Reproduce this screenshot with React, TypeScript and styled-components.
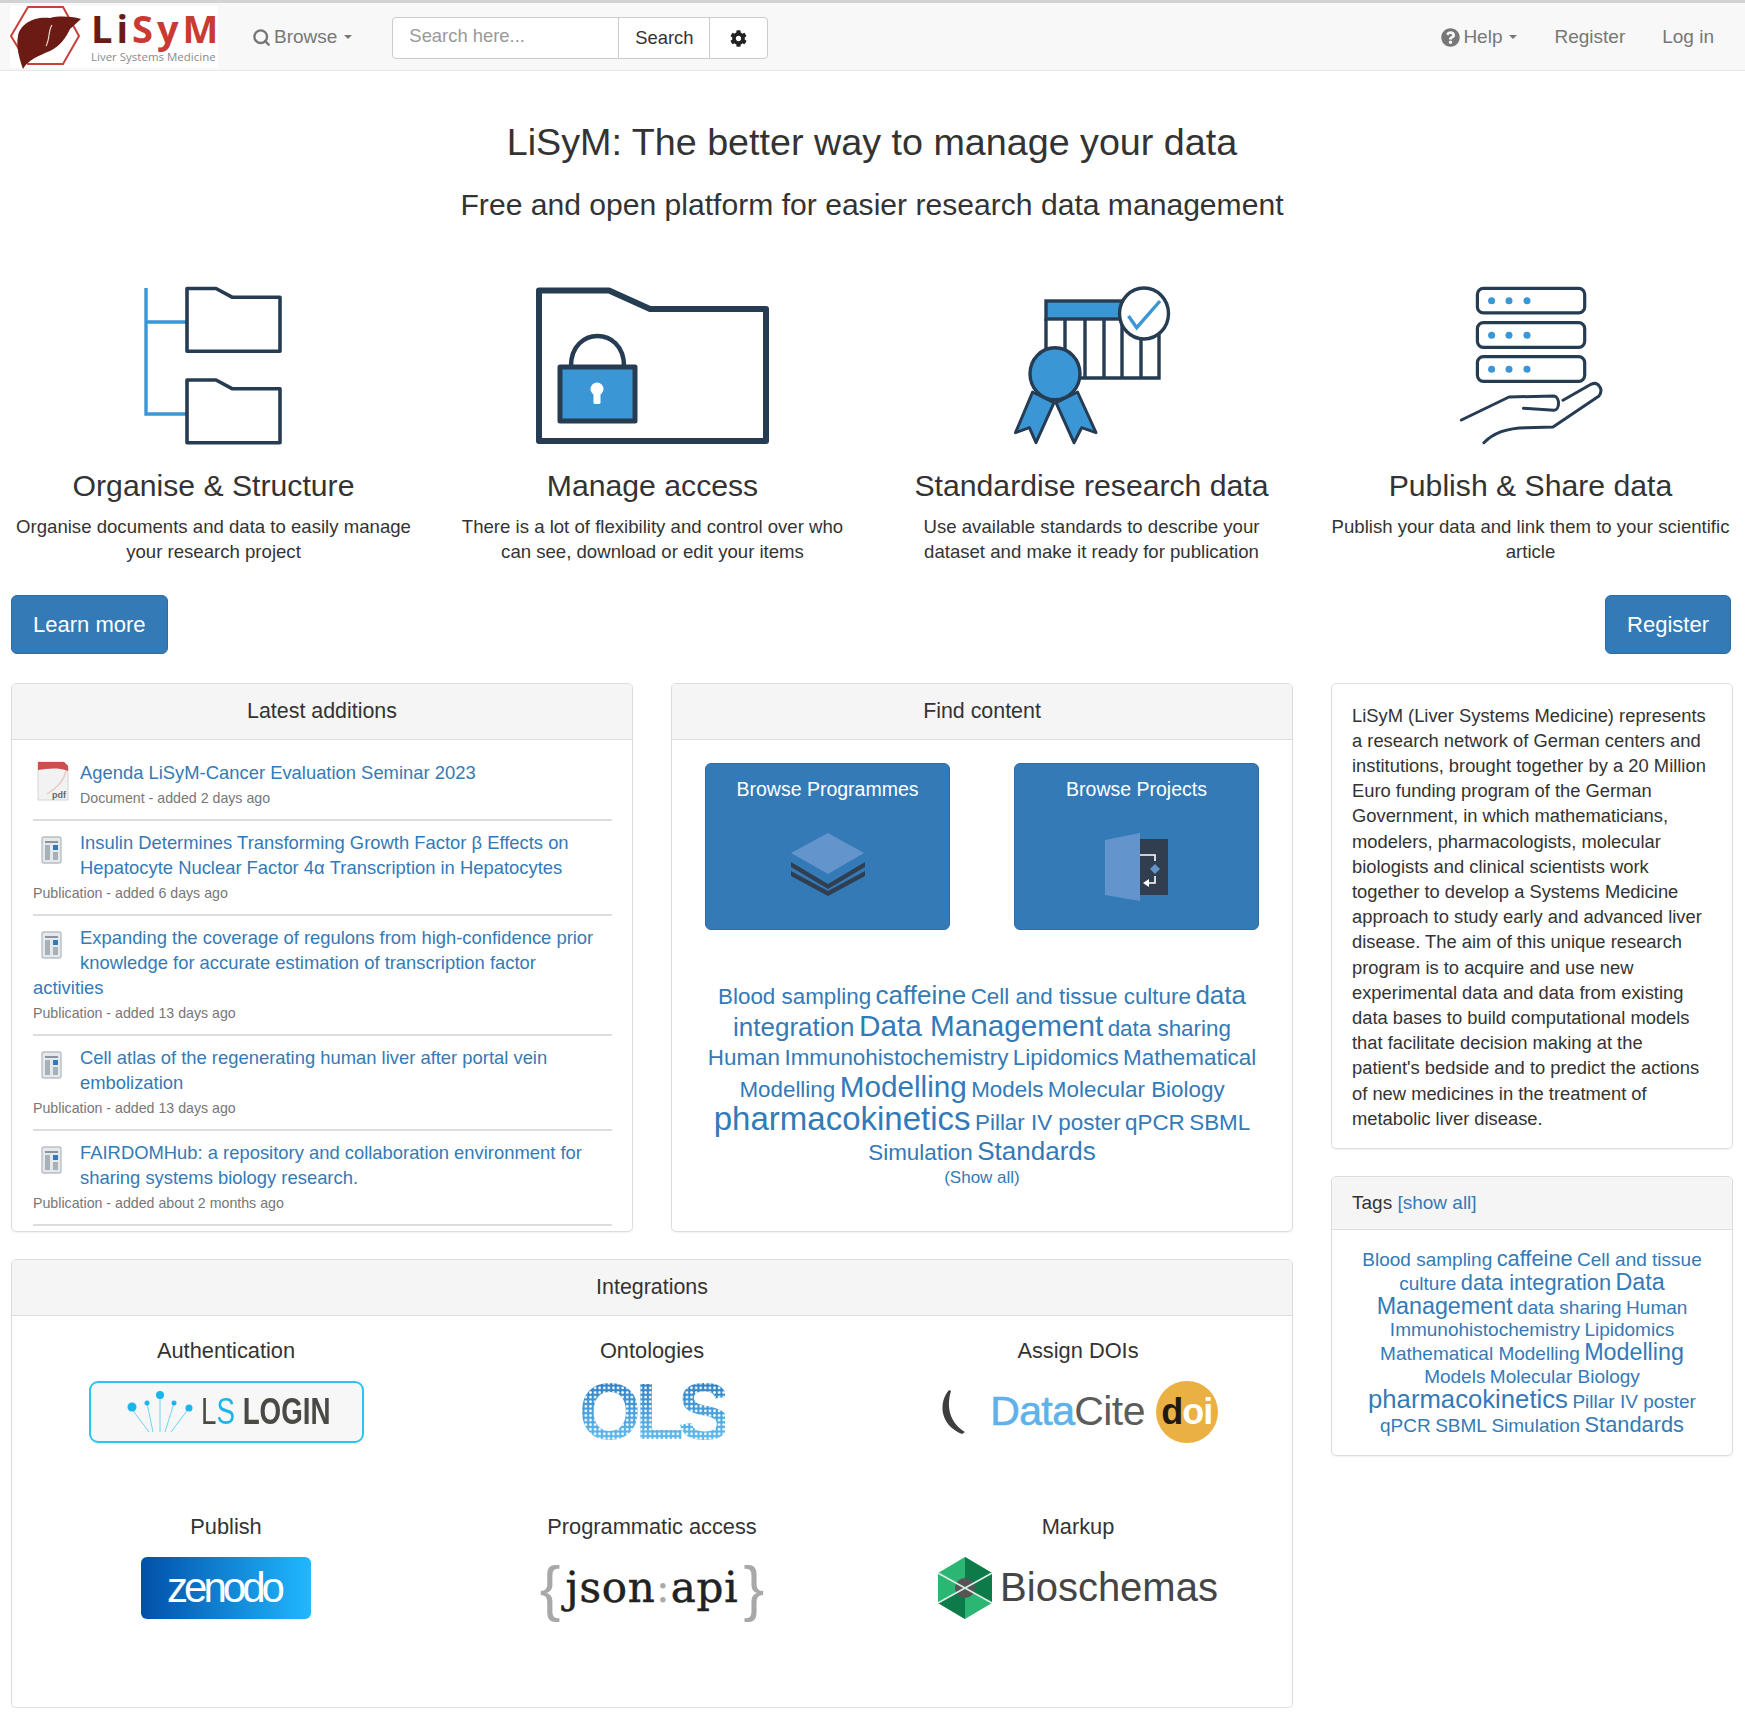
import { Search } from "lucide-react";
import { FaCog, FaQuestionCircle } from "react-icons/fa";
import styled, { createGlobalStyle } from "styled-components";

const GlobalStyle = createGlobalStyle`
  html, body {
    margin: 0;
    background: #fff;
    color: #333;
    font-family: "Liberation Sans", Arial, sans-serif;
    overflow-x: hidden;
  }
`;

const DARK = "#263c52";
const BLUE = "#3b96d6";

const Navbar = styled.nav`
  display: flex;
  align-items: center;
  height: 64px;
  padding: 3px 0 0 10px;
  background: #f8f8f8;
  border-top: 3px solid #d2d3d4;
  border-bottom: 1px solid #e7e7e7;
`;

const Brand = styled.div`
  display: flex;
  width: 208px;
  height: 62px;
  margin-top: -3px;
  background: #fff;
  flex-shrink: 0;
`;

const BrandText = styled.div`
  display: flex;
  flex-direction: column;
  margin-left: 9px;
`;

const BrandName = styled.div`
  font-family: "Open Sans", sans-serif;
  font-weight: 700;
  font-size: 38px;
  line-height: 44px;
  letter-spacing: 4px;
  color: #cb3a32;
  height: 43px;
  span {
    color: #6b1a14;
  }
`;

const BrandSub = styled.div`
  font-family: "Open Sans", sans-serif;
  font-size: 11.5px;
  line-height: 16px;
  color: #8b8b8b;
  white-space: nowrap;
`;

const NavLink = styled.span<{ $ml?: number }>`
  display: inline-flex;
  align-items: center;
  gap: 3px;
  margin-left: ${(p) => p.$ml ?? 0}px;
  margin-top: -2px;
  color: #777;
  font-size: 19px;
`;

const Caret = styled.i`
  display: inline-block;
  margin-left: 4px;
  border-top: 4px solid #777;
  border-left: 4px solid transparent;
  border-right: 4px solid transparent;
`;

const SearchGroup = styled.div`
  display: flex;
  height: 40px;
  margin-left: 40px;
  border: 1px solid #ccc;
  border-radius: 4px;
  background: #fff;
`;

const SearchInput = styled.div`
  width: 209px;
  padding-left: 16px;
  line-height: 36px;
  font-size: 18.4px;
  color: #999;
`;

const SearchButton = styled.div<{ $w: number }>`
  width: ${(p) => p.$w}px;
  display: flex;
  align-items: center;
  justify-content: center;
  border-left: 1px solid #ccc;
  font-size: 18.4px;
  color: #333;
`;

const NavRight = styled.div`
  display: flex;
  align-items: center;
  margin-left: auto;
  padding-right: 31px;
`;

const Main = styled.main`
  padding: 0 12px 0 11px;
`;

const Title = styled.h1`
  margin: 48px 0 0;
  text-align: center;
  font-size: 37.7px;
  line-height: 46px;
  font-weight: 400;
`;

const Subtitle = styled.h2`
  margin: 21.5px 0 0;
  text-align: center;
  font-size: 30.1px;
  line-height: 36px;
  font-weight: 400;
`;

const Features = styled.section`
  display: grid;
  grid-template-columns: repeat(4, 1fr);
  column-gap: 34px;
  margin-top: 63px;
`;

const Feature = styled.div`
  text-align: center;
`;

const FeatureIcon = styled.svg`
  display: block;
  height: 160px;
  margin: 0 auto;
`;

const FeatureTitle = styled.h3`
  margin: 20px 0 0;
  font-size: 30.2px;
  line-height: 40px;
  font-weight: 400;
`;

const FeatureText = styled.p`
  margin: 8px 0 0;
  padding: 0 2.5px;
  font-size: 18.6px;
  line-height: 25.5px;
`;

const Actions = styled.div`
  display: flex;
  justify-content: space-between;
  margin-top: 30px;
  padding-right: 2px;
`;

const BigButton = styled.div`
  padding: 0 21px;
  height: 59px;
  line-height: 57px;
  font-size: 22px;
  color: #fff;
  background: #337ab7;
  border: 1px solid #2e6da4;
  border-radius: 6px;
  box-sizing: border-box;
`;

const Columns = styled.div`
  display: grid;
  grid-template-columns: 1fr 402px;
  column-gap: 38px;
  margin-top: 29px;
`;

const LeftColumn = styled.div`
  display: flex;
  flex-direction: column;
  gap: 27px;
`;

const TopPanels = styled.div`
  display: grid;
  grid-template-columns: 1fr 1fr;
  column-gap: 38px;
`;

const RightColumn = styled.div`
  display: flex;
  flex-direction: column;
  gap: 27px;
  align-items: stretch;
`;

const Panel = styled.section<{ $h?: number }>`
  box-sizing: border-box;
  height: ${(p) => (p.$h ? `${p.$h}px` : "auto")};
  border: 1px solid #ddd;
  border-radius: 5px;
  box-shadow: 0 1px 2px rgba(0, 0, 0, 0.06);
  overflow: hidden;
`;

const PanelHeading = styled.header<{ $left?: boolean }>`
  height: ${(p) => (p.$left ? 53 : 56)}px;
  line-height: ${(p) => (p.$left ? 51 : 55)}px;
  text-align: ${(p) => (p.$left ? "left" : "center")};
  padding: 0 20px;
  font-size: ${(p) => (p.$left ? 19 : 21.4)}px;
  background: #f5f5f5;
  border-bottom: 1px solid #ddd;
  box-sizing: border-box;
  a {
    color: #337ab7;
  }
`;

const ItemList = styled.div`
  padding: 20px 20px 0 21px;
`;

const Item = styled.article`
  padding: 0 0 10px;
  margin-bottom: 9px;
  border-bottom: 2px solid #ddd;
  &:last-child {
    margin-bottom: 0;
  }
`;

const ItemIcon = styled.svg`
  float: left;
  width: 47px;
  height: 42px;
  margin-top: 1px;
`;

const ItemTitle = styled.a`
  color: #337ab7;
  font-size: 18.4px;
  line-height: 25px;
  display: block;
  padding-right: 6px;
`;

const ItemMeta = styled.div`
  margin-top: 2px;
  color: #777;
  font-size: 14.2px;
  line-height: 22px;
`;

const BrowseRow = styled.div`
  display: grid;
  grid-template-columns: 245px 245px;
  justify-content: space-between;
  margin: 23px 33px 0 33px;
`;

const BrowseCard = styled.div`
  display: flex;
  flex-direction: column;
  align-items: center;
  height: 167px;
  padding-top: 13px;
  box-sizing: border-box;
  background: #337ab7;
  border: 1px solid #2e6da4;
  border-radius: 6px;
  color: #fff;
  font-size: 19.5px;
  line-height: 24px;
`;

const BrowseIcon = styled.svg`
  margin-top: 31px;
`;

const Cloud = styled.div<{ $lh: number; $pad: number; $mt: number }>`
  margin-top: ${(p) => p.$mt}px;
  padding: 0 ${(p) => p.$pad}px;
  text-align: center;
  line-height: ${(p) => p.$lh}px;
`;

const CloudFoot = styled.div`
  height: 18px;
`;

const Tag = styled.a<{ $size: number }>`
  color: #337ab7;
  font-size: ${(p) => p.$size}px;
`;

const ShowAll = styled.div`
  text-align: center;
  color: #337ab7;
  font-size: 17px;
  line-height: 20px;
`;

const About = styled.p`
  margin: 0;
  padding: 19px 20px 17px 20px;
  font-size: 18.35px;
  line-height: 25.2px;
`;

const IntegrationGrid = styled.div`
  display: grid;
  grid-template-columns: repeat(3, 426px);
  justify-content: center;
  grid-auto-rows: 176px;
  padding-top: 22px;
`;

const Integration = styled.div`
  display: flex;
  flex-direction: column;
  align-items: center;
`;

const IntegrationLabel = styled.div`
  font-size: 21.8px;
  line-height: 26px;
  margin-bottom: 17px;
`;

const LogoSlot = styled.div`
  display: flex;
  align-items: center;
  justify-content: center;
  height: 62px;
`;

const LsLogin = styled.div`
  display: flex;
  align-items: center;
  box-sizing: border-box;
  width: 275px;
  height: 62px;
  padding-left: 36px;
  background: #f7f7f7;
  border: 2px solid #2cc4f2;
  border-radius: 9px;
`;

const LsRaysIcon = styled.svg`
  flex-shrink: 0;
`;

const LsText = styled.div`
  margin-left: 8px;
  font-size: 37px;
  color: #4a4a44;
  transform: scaleX(0.75);
  transform-origin: left center;
  white-space: nowrap;
  b {
    font-weight: 700;
  }
  span {
    color: #1db4e8;
  }
`;

const OlsText = styled.div`
  font-size: 80px;
  font-weight: 700;
  letter-spacing: -6px;
  line-height: 62px;
  color: transparent;
  background-image: radial-gradient(circle, #fff 0 0.9px, transparent 1.7px),
    linear-gradient(#2f7fc4, #62bff0);
  background-size: 4.6px 4.6px, 100% 100%;
  -webkit-background-clip: text;
  background-clip: text;
`;

const DataCite = styled.div`
  display: flex;
  align-items: center;
  font-size: 41px;
  letter-spacing: -0.6px;
  color: #5c5c5c;
  span {
    color: #5fb1ea;
    -webkit-text-stroke: 0.6px #5fb1ea;
  }
`;

const CrescentIcon = styled.svg`
  margin-right: 23px;
`;

const DoiBadge = styled.div`
  display: flex;
  align-items: center;
  justify-content: center;
  width: 62px;
  height: 62px;
  margin-left: 11px;
  border-radius: 50%;
  background: #eab043;
  color: #fff;
  font-size: 36px;
  font-weight: 700;
  letter-spacing: -1px;
  b {
    color: #1e1a12;
  }
`;

const Zenodo = styled.div`
  display: flex;
  align-items: center;
  justify-content: center;
  width: 170px;
  height: 62px;
  padding-right: 4px;
  box-sizing: border-box;
  border-radius: 6px;
  background: linear-gradient(90deg, #0250a8, #20b8ff);
  color: #fff;
  font-size: 42px;
  letter-spacing: -4px;
`;

const JsonApi = styled.div`
  display: flex;
  align-items: center;
  font-family: "DejaVu Serif", serif;
  font-size: 42px;
  letter-spacing: 0.8px;
  -webkit-text-stroke: 0.5px #222;
  color: #222;
  em {
    font-style: normal;
    color: #aaa;
    -webkit-text-stroke: 0;
  }
`;

const Brace = styled.span<{ $side: "left" | "right" }>`
  font-family: "Liberation Sans", sans-serif;
  font-weight: 400;
  font-size: 62px;
  letter-spacing: 0;
  color: #a8a8a8;
  -webkit-text-stroke: 0;
  margin-${(p) => p.$side}: 5px;
`;

const Bioschemas = styled.div`
  display: flex;
  align-items: center;
  gap: 8px;
  font-size: 40px;
  color: #454545;
`;

const latest = [
  { kind: "pdf", title: "Agenda LiSyM-Cancer Evaluation Seminar 2023", meta: "Document - added 2 days ago" },
  { kind: "pub", title: "Insulin Determines Transforming Growth Factor β Effects on Hepatocyte Nuclear Factor 4α Transcription in Hepatocytes", meta: "Publication - added 6 days ago" },
  { kind: "pub", title: "Expanding the coverage of regulons from high-confidence prior knowledge for accurate estimation of transcription factor activities", meta: "Publication - added 13 days ago" },
  { kind: "pub", title: "Cell atlas of the regenerating human liver after portal vein embolization", meta: "Publication - added 13 days ago" },
  { kind: "pub", title: "FAIRDOMHub: a repository and collaboration environment for sharing systems biology research.", meta: "Publication - added about 2 months ago" },
];

const findTags: [string, number][] = [
  ["Blood sampling", 22.4], ["caffeine", 26], ["Cell and tissue culture", 22.4], ["data integration", 26],
  ["Data Management", 29.7], ["data sharing", 22.4], ["Human", 22.4], ["Immunohistochemistry", 22.4], ["Lipidomics", 22.4],
  ["Mathematical Modelling", 22.4], ["Modelling", 29.7], ["Models", 22.4], ["Molecular Biology", 22.4],
  ["pharmacokinetics", 33], ["Pillar IV poster", 22.4], ["qPCR", 22.4], ["SBML", 22.4], ["Simulation", 22.4], ["Standards", 26],
];

const sideTags: [string, number][] = [
  ["Blood sampling", 19], ["caffeine", 21.8], ["Cell and tissue culture", 19], ["data integration", 21.8],
  ["Data Management", 23.3], ["data sharing", 19], ["Human", 19], ["Immunohistochemistry", 19], ["Lipidomics", 19],
  ["Mathematical Modelling", 19], ["Modelling", 23.3], ["Models", 19], ["Molecular Biology", 19],
  ["pharmacokinetics", 25.7], ["Pillar IV poster", 19], ["qPCR", 19], ["SBML", 19], ["Simulation", 19], ["Standards", 21.8],
];

function LiverLogo() {
  return (
    <svg width="72" height="62" viewBox="0 0 72 62" overflow="visible">
      <path d="M1 30 L18 1 H53 L69 30 L53 58 H18 Z" fill="none" stroke="#c9403a" strokeWidth="2" />
      <path
        d="M71 13 C60 10 48 10 40 12 C24 10 10 18 8 30 C6 40 9 52 13 63 C18 54 28 50 40 45 C50 40 56 32 60 23 Z"
        fill="#6b1a14"
      />
      <path d="M42 19 C38 25 40 33 36 40" fill="none" stroke="#e8d8d4" strokeWidth="1.2" />
    </svg>
  );
}

function FolderTree() {
  const folder = (y: number) =>
    `M43 ${y} H72 L88 ${y + 8.7} H136 V${y + 62.7} H43 Z`;
  return (
    <FeatureIcon viewBox="0 0 140 160" width="140">
      <path d="M2 2 V128 H43 M2 36 H43" fill="none" stroke={BLUE} strokeWidth="3.4" />
      <path d={folder(2.5)} fill="none" stroke={DARK} strokeWidth="3.6" strokeLinejoin="round" />
      <path d={folder(94)} fill="none" stroke={DARK} strokeWidth="3.6" strokeLinejoin="round" />
    </FeatureIcon>
  );
}

function LockedFolder() {
  return (
    <FeatureIcon viewBox="0 0 236 160" width="236">
      <path d="M4 4.5 H74 L115 23 H231 V155 H4 Z" fill="none" stroke={DARK} strokeWidth="6" strokeLinejoin="round" />
      <path d="M36 80 C36 40 89 40 89 80" fill="none" stroke={DARK} strokeWidth="4.5" />
      <rect x="25" y="81" width="75" height="54" fill={BLUE} stroke={DARK} strokeWidth="5" strokeLinejoin="round" />
      <circle cx="62" cy="103" r="6.5" fill="#fff" />
      <rect x="58.5" y="104" width="7" height="14" rx="1.5" fill="#fff" />
    </FeatureIcon>
  );
}

function Certificate() {
  return (
    <FeatureIcon viewBox="0 0 160 160" width="160">
      <path
        d="M34 33 V92 H147 V33 M53 33 V92 M73 33 V92 M92 33 V92 M110 33 V92 M129 33 V92"
        fill="none"
        stroke={DARK}
        strokeWidth="3.4"
      />
      <rect x="34" y="15" width="80" height="18" fill={BLUE} stroke={DARK} strokeWidth="3.4" />
      <ellipse cx="132" cy="27.5" rx="24.5" ry="25.5" fill="#fff" stroke={DARK} strokeWidth="3.4" />
      <path d="M116.5 30 L124.7 41.7 L148 15" fill="none" stroke={BLUE} strokeWidth="3.4" />
      <path d="M20.6 106 L3.5 146.7 L17.4 141.7 L24 156.7 L42 116.7 Z" fill={BLUE} stroke={DARK} strokeWidth="3" strokeLinejoin="round" />
      <path d="M65.5 106 L84 146.7 L69.6 141.7 L62 156.7 L44 116.7 Z" fill={BLUE} stroke={DARK} strokeWidth="3" strokeLinejoin="round" />
      <ellipse cx="43" cy="87.7" rx="25" ry="26" fill={BLUE} stroke={DARK} strokeWidth="3.4" />
    </FeatureIcon>
  );
}

function ServerHand() {
  const rows = [2.3, 36.7, 70.7];
  return (
    <FeatureIcon viewBox="0 0 146 160" width="146">
      {rows.map((y) => (
        <g key={y}>
          <rect x="19.4" y={y} width="107.3" height="24.6" rx="6" fill="none" stroke={DARK} strokeWidth="3.2" />
          {[33.6, 51, 69].map((x) => (
            <circle key={x} cx={x} cy={y + 12.5} r="3.5" fill={BLUE} />
          ))}
        </g>
      ))}
      <path
        d="M3.4 134 L51 111 L96 110 C102 111 102 124 96 124.3 L65.5 122.3"
        fill="none"
        stroke={DARK}
        strokeWidth="3"
        strokeLinecap="round"
        strokeLinejoin="round"
      />
      <path
        d="M105 114.3 L133 98.3 C140 95 146 103 141 110 L95 141 L68 141.7 C50 142 36 146 25.9 156.7"
        fill="none"
        stroke={DARK}
        strokeWidth="3"
        strokeLinecap="round"
        strokeLinejoin="round"
      />
    </FeatureIcon>
  );
}

function PdfIcon() {
  return (
    <ItemIcon viewBox="0 0 47 42">
      <path d="M5 1 H31 L35 5 V39 H5 Z" fill="#f2f2f2" stroke="#d4d4d4" />
      <path d="M5 1 H31 L35 5 V10 C24 6 14 8 5 9 Z" fill="#c9504d" />
      <path d="M33 10 C30 22 22 28 14 33" fill="none" stroke="#eac4c4" strokeWidth="1.4" />
      <text x="19" y="37" fontSize="9" fontFamily="Liberation Sans, sans-serif" fontWeight="700" fill="#666">
        pdf
      </text>
    </ItemIcon>
  );
}

function PublicationIcon() {
  return (
    <ItemIcon viewBox="0 0 47 42">
      <rect x="9" y="6" width="19" height="26" rx="2" fill="#e6e9ec" stroke="#b9bfc6" strokeWidth="1.4" />
      <rect x="12" y="10" width="13" height="2" fill="#8b949e" />
      <rect x="12" y="14" width="5" height="15" fill="#a8b0b8" />
      <rect x="20" y="14" width="5" height="5" fill="#337ab7" />
      <rect x="20" y="21" width="5" height="8" fill="#a8b0b8" />
    </ItemIcon>
  );
}

function StackIcon() {
  return (
    <BrowseIcon width="74" height="64" viewBox="0 0 74 64">
      <path d="M0 30 L37 52 L74 30 V35 L37 57 L0 35 Z" fill="#313e50" />
      <path d="M0 39 L37 59 L74 39 V44 L37 64 L0 44 Z" fill="#313e50" />
      <path d="M37 1 L73 21 L37 42 L0 21 Z" fill="#6394cc" />
    </BrowseIcon>
  );
}

function DoorIcon() {
  return (
    <BrowseIcon width="64" height="70" viewBox="0 0 64 70">
      <rect x="35" y="7" width="28" height="56" fill="#313e50" />
      <path d="M0 8 L35 1 V69 L0 63 Z" fill="#6394cc" />
      <path d="M35 23 H50 V29 M50 44 V51 H42" fill="none" stroke="#fff" strokeWidth="1.6" />
      <path d="M44 47 L38 51 L44 55 Z" fill="#fff" />
      <path d="M50 32 L55 37 L50 42 L45 37 Z" fill="#6394cc" />
    </BrowseIcon>
  );
}

function LsRays() {
  return (
    <LsRaysIcon width="66" height="44" viewBox="0 0 66 44">
      <path d="M4 18 L22 42 M20 13 L26 42 M33 6 L33 42 M47 13 L38 42 M62 18 L44 42" stroke="#6fd4f5" strokeWidth="1" fill="none" />
      <circle cx="5" cy="17" r="4.5" fill="#18b6ea" />
      <circle cx="20" cy="13" r="2.5" fill="#18b6ea" />
      <circle cx="33" cy="5" r="4" fill="#18b6ea" />
      <circle cx="47" cy="13" r="2.5" fill="#18b6ea" />
      <circle cx="62" cy="18" r="3.5" fill="#18b6ea" />
    </LsRaysIcon>
  );
}

function Crescent() {
  return (
    <CrescentIcon width="29" height="46" viewBox="0 0 29 46">
      <path d="M11 1 C0 14 2 36 24 45 L27 43 C12 34 8 18 13 2 Z" fill="#3e3e3e" />
    </CrescentIcon>
  );
}

function BioHex() {
  return (
    <svg width="54" height="62" viewBox="0 0 54 62">
      <path d="M27 0 L54 16 V46 L27 62 L0 46 V16 Z" fill="#2bb673" />
      <path d="M27 0 L54 16 V46 L27 31 Z" fill="#0d7a4a" />
      <path d="M27 31 L27 62 L0 46 Z" fill="#0d7a4a" />
      <circle cx="27" cy="31" r="10" fill="#555" />
      <path d="M0 16 L54 46 M54 16 L0 46" stroke="#d9efe3" strokeWidth="1.6" />
    </svg>
  );
}

export default function App() {
  return (
    <>
      <GlobalStyle />
      <Navbar>
        <Brand>
          <LiverLogo />
          <BrandText>
            <BrandName>
              <span>Li</span>SyM
            </BrandName>
            <BrandSub>Liver Systems Medicine</BrandSub>
          </BrandText>
        </Brand>
        <NavLink $ml={34}>
          <Search size={19} strokeWidth={3} />
          Browse
          <Caret />
        </NavLink>
        <SearchGroup>
          <SearchInput>Search here...</SearchInput>
          <SearchButton $w={90}>Search</SearchButton>
          <SearchButton $w={57}>
            <FaCog size={17} color="#222" />
          </SearchButton>
        </SearchGroup>
        <NavRight>
          <NavLink>
            <FaQuestionCircle size={19} />
            Help
            <Caret />
          </NavLink>
          <NavLink $ml={37}>Register</NavLink>
          <NavLink $ml={37}>Log in</NavLink>
        </NavRight>
      </Navbar>
      <Main>
        <Title>LiSyM: The better way to manage your data</Title>
        <Subtitle>Free and open platform for easier research data management</Subtitle>
        <Features>
          <Feature>
            <FolderTree />
            <FeatureTitle>Organise &amp; Structure</FeatureTitle>
            <FeatureText>Organise documents and data to easily manage your research project</FeatureText>
          </Feature>
          <Feature>
            <LockedFolder />
            <FeatureTitle>Manage access</FeatureTitle>
            <FeatureText>There is a lot of flexibility and control over who can see, download or edit your items</FeatureText>
          </Feature>
          <Feature>
            <Certificate />
            <FeatureTitle>Standardise research data</FeatureTitle>
            <FeatureText>Use available standards to describe your dataset and make it ready for publication</FeatureText>
          </Feature>
          <Feature>
            <ServerHand />
            <FeatureTitle>Publish &amp; Share data</FeatureTitle>
            <FeatureText>Publish your data and link them to your scientific article</FeatureText>
          </Feature>
        </Features>
        <Actions>
          <BigButton>Learn more</BigButton>
          <BigButton>Register</BigButton>
        </Actions>
        <Columns>
          <LeftColumn>
            <TopPanels>
              <Panel $h={549}>
                <PanelHeading>Latest additions</PanelHeading>
                <ItemList>
                  {latest.map((item) => (
                    <Item key={item.title}>
                      {item.kind === "pdf" ? <PdfIcon /> : <PublicationIcon />}
                      <ItemTitle>{item.title}</ItemTitle>
                      <ItemMeta>{item.meta}</ItemMeta>
                    </Item>
                  ))}
                </ItemList>
              </Panel>
              <Panel $h={549}>
                <PanelHeading>Find content</PanelHeading>
                <BrowseRow>
                  <BrowseCard>
                    Browse Programmes
                    <StackIcon />
                  </BrowseCard>
                  <BrowseCard>
                    Browse Projects
                    <DoorIcon />
                  </BrowseCard>
                </BrowseRow>
                <Cloud $lh={27} $pad={30} $mt={52}>
                  {findTags.map(([name, size]) => (
                    <span key={name}>
                      <Tag $size={size}>{name}</Tag>{" "}
                    </span>
                  ))}
                </Cloud>
                <ShowAll>(Show all)</ShowAll>
              </Panel>
            </TopPanels>
            <Panel $h={449}>
              <PanelHeading>Integrations</PanelHeading>
              <IntegrationGrid>
                <Integration>
                  <IntegrationLabel>Authentication</IntegrationLabel>
                  <LogoSlot>
                    <LsLogin>
                      <LsRays />
                      <LsText>
                        L<span>S</span> <b>LOGIN</b>
                      </LsText>
                    </LsLogin>
                  </LogoSlot>
                </Integration>
                <Integration>
                  <IntegrationLabel>Ontologies</IntegrationLabel>
                  <LogoSlot>
                    <OlsText>OLS</OlsText>
                  </LogoSlot>
                </Integration>
                <Integration>
                  <IntegrationLabel>Assign DOIs</IntegrationLabel>
                  <LogoSlot>
                    <DataCite>
                      <Crescent />
                      <span>Data</span>Cite
                      <DoiBadge>
                        <b>d</b>oi
                      </DoiBadge>
                    </DataCite>
                  </LogoSlot>
                </Integration>
                <Integration>
                  <IntegrationLabel>Publish</IntegrationLabel>
                  <LogoSlot>
                    <Zenodo>zenodo</Zenodo>
                  </LogoSlot>
                </Integration>
                <Integration>
                  <IntegrationLabel>Programmatic access</IntegrationLabel>
                  <LogoSlot>
                    <JsonApi>
                      <Brace $side="right">{"{"}</Brace>
                      json<em>:</em>api
                      <Brace $side="left">{"}"}</Brace>
                    </JsonApi>
                  </LogoSlot>
                </Integration>
                <Integration>
                  <IntegrationLabel>Markup</IntegrationLabel>
                  <LogoSlot>
                    <Bioschemas>
                      <BioHex />
                      Bioschemas
                    </Bioschemas>
                  </LogoSlot>
                </Integration>
              </IntegrationGrid>
            </Panel>
          </LeftColumn>
          <RightColumn>
            <Panel>
              <About>
                LiSyM (Liver Systems Medicine) represents a research network of German centers and institutions,
                brought together by a 20 Million Euro funding program of the German Government, in which
                mathematicians, modelers, pharmacologists, molecular biologists and clinical scientists work together
                to develop a Systems Medicine approach to study early and advanced liver disease. The aim of this
                unique research program is to acquire and use new experimental data and data from existing data bases
                to build computational models that facilitate decision making at the patient's bedside and to predict
                the actions of new medicines in the treatment of metabolic liver disease.
              </About>
            </Panel>
            <Panel>
              <PanelHeading $left>
                Tags <a>[show all]</a>
              </PanelHeading>
              <Cloud $lh={21.8} $pad={22} $mt={18}>
                {sideTags.map(([name, size]) => (
                  <span key={name}>
                    <Tag $size={size}>{name}</Tag>{" "}
                  </span>
                ))}
              </Cloud>
              <CloudFoot />
            </Panel>
          </RightColumn>
        </Columns>
      </Main>
    </>
  );
}
